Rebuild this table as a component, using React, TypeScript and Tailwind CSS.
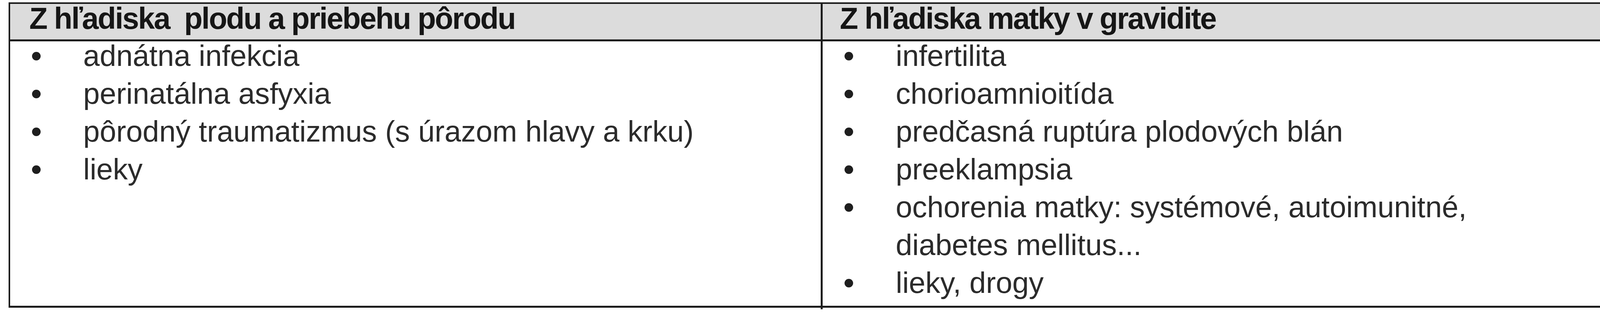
const leftItems: string[][] = [
  ['adnátna infekcia'],
  ['perinatálna asfyxia'],
  ['pôrodný traumatizmus (s úrazom hlavy a krku)'],
  ['lieky'],
];

const rightItems: string[][] = [
  ['infertilita'],
  ['chorioamnioitída'],
  ['predčasná ruptúra plodových blán'],
  ['preeklampsia'],
  ['ochorenia matky: systémové, autoimunitné,', 'diabetes mellitus...'],
  ['lieky, drogy'],
];

function BulletList({ items }: { items: string[][] }) {
  return (
    <ul className="-mt-3">
      {items.map((lines, i) => (
        <li key={i} className="flex items-start text-[76px] leading-[97px] text-[#2b2b2b]">
          <span className="w-[187px] shrink-0">
            <span className="block mt-[39px] ml-[56px] w-[22px] h-[22px] rounded-full bg-[#1e1e1e]" />
          </span>
          <span>
            {lines.map((line, j) => (
              <span key={j} className="block whitespace-nowrap">
                {line}
              </span>
            ))}
          </span>
        </li>
      ))}
    </ul>
  );
}

export default function App() {
  return (
    <div className="w-[4208px] h-[800px] bg-white pt-[6px] pl-[22px] font-['Liberation_Sans',Arial,sans-serif]">
      <div className="w-[4159px] h-[783px] border-[#1c1c1c] border-t-[4px] border-l-[4px] border-r-[5px] border-b-[5px] flex flex-col">
        {/* header row */}
        <div className="grid grid-cols-[2075px_2075px] h-[96px] shrink-0 bg-[#dcdcdc] border-b-[5px] border-[#1c1c1c]">
          <div className="pl-[49px] text-[77px] leading-[75px] font-bold tracking-[-2.6px] text-[#161616] whitespace-pre">
            Z hľadiska  plodu a priebehu pôrodu
          </div>
          <div className="pl-[44px] border-l-[5px] border-[#1c1c1c] text-[77px] leading-[75px] font-bold tracking-[-2.6px] text-[#161616] whitespace-pre">
            Z hľadiska matky v gravidite
          </div>
        </div>

        {/* body row */}
        <div className="grid grid-cols-[2075px_2075px] flex-1">
          <div>
            <BulletList items={leftItems} />
          </div>
          <div className="border-l-[5px] border-[#1c1c1c]">
            <BulletList items={rightItems} />
          </div>
        </div>
      </div>
      <div className="ml-[2079px] w-[5px] h-[4px] bg-[#1c1c1c]" />
    </div>
  );
}
